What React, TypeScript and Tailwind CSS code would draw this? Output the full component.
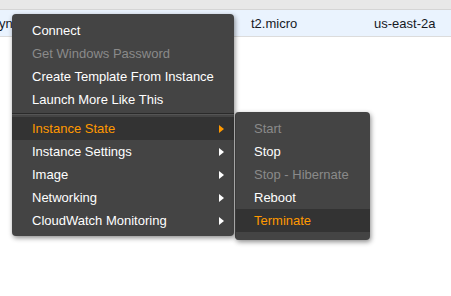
import React from 'react'

const MAIN = [
  { label: 'Connect' },
  { label: 'Get Windows Password', disabled: true },
  { label: 'Create Template From Instance' },
  { label: 'Launch More Like This' },
  { sep: true },
  { label: 'Instance State', sub: true, active: true },
  { label: 'Instance Settings', sub: true },
  { label: 'Image', sub: true },
  { label: 'Networking', sub: true },
  { label: 'CloudWatch Monitoring', sub: true },
]

const STATE = [
  { label: 'Start', disabled: true },
  { label: 'Stop' },
  { label: 'Stop - Hibernate', disabled: true },
  { label: 'Reboot' },
  { label: 'Terminate', active: true },
]

function Arrow({ active }: { active?: boolean }) {
  return (
    <svg width="5" height="8" viewBox="0 0 5 8" className="shrink-0">
      <path d="M0 0 L5 4 L0 8 Z" fill={active ? '#ff9900' : '#ffffff'} />
    </svg>
  )
}

function Item({ label, disabled, active, sub, pl }: { label: string; disabled?: boolean; active?: boolean; sub?: boolean; pl: string }) {
  return (
    <div
      className={
        'flex items-center h-[23px] pr-[10px] ' + pl + ' ' +
        (active ? 'bg-[#333333] text-[#ff9900]' : disabled ? 'text-[#8a8a8a]' : 'text-white')
      }
    >
      <span className="flex-1 whitespace-nowrap">{label}</span>
      {sub && <Arrow active={active} />}
    </div>
  )
}

export default function App() {
  return (
    <div className="relative w-[451px] h-[296px] bg-white overflow-hidden text-[13px] font-['Liberation_Sans',Arial,sans-serif]">
      <div className="h-[10px] bg-[#e8e8e8] border-b border-[#d5d5d5]" />
      <div className="flex items-center h-[27px] pt-[2px] bg-[#eaf3fe] border-b border-[#dcdcdc] text-[#16191f]">
        <span className="w-[252px] -ml-[1px]">yn</span>
        <span className="w-[123px]">t2.micro</span>
        <span>us-east-2a</span>
      </div>

      <div className="absolute left-[12px] top-[14px] w-[222px] pt-[5px] pb-[4px] rounded-[4px] bg-[#444444] shadow-[1px_2px_5px_rgba(0,0,0,0.45)]">
        {MAIN.map((m, i) =>
          m.sep ? (
            <div key={i} className="my-[2px] border-t border-[#2a2a2a] border-b border-b-[#555555]" />
          ) : (
            <Item key={i} label={m.label!} disabled={m.disabled} active={m.active} sub={m.sub} pl="pl-[20px]" />
          )
        )}
      </div>

      <div className="absolute left-[235px] top-[112px] w-[135px] pt-[5px] pb-[8px] rounded-[4px] bg-[#444444] border-l border-[#3a3a3a] shadow-[1px_2px_5px_rgba(0,0,0,0.45)]">
        {STATE.map((s, i) => (
          <Item key={i} label={s.label} disabled={s.disabled} active={s.active} pl="pl-[18px]" />
        ))}
      </div>
    </div>
  )
}
